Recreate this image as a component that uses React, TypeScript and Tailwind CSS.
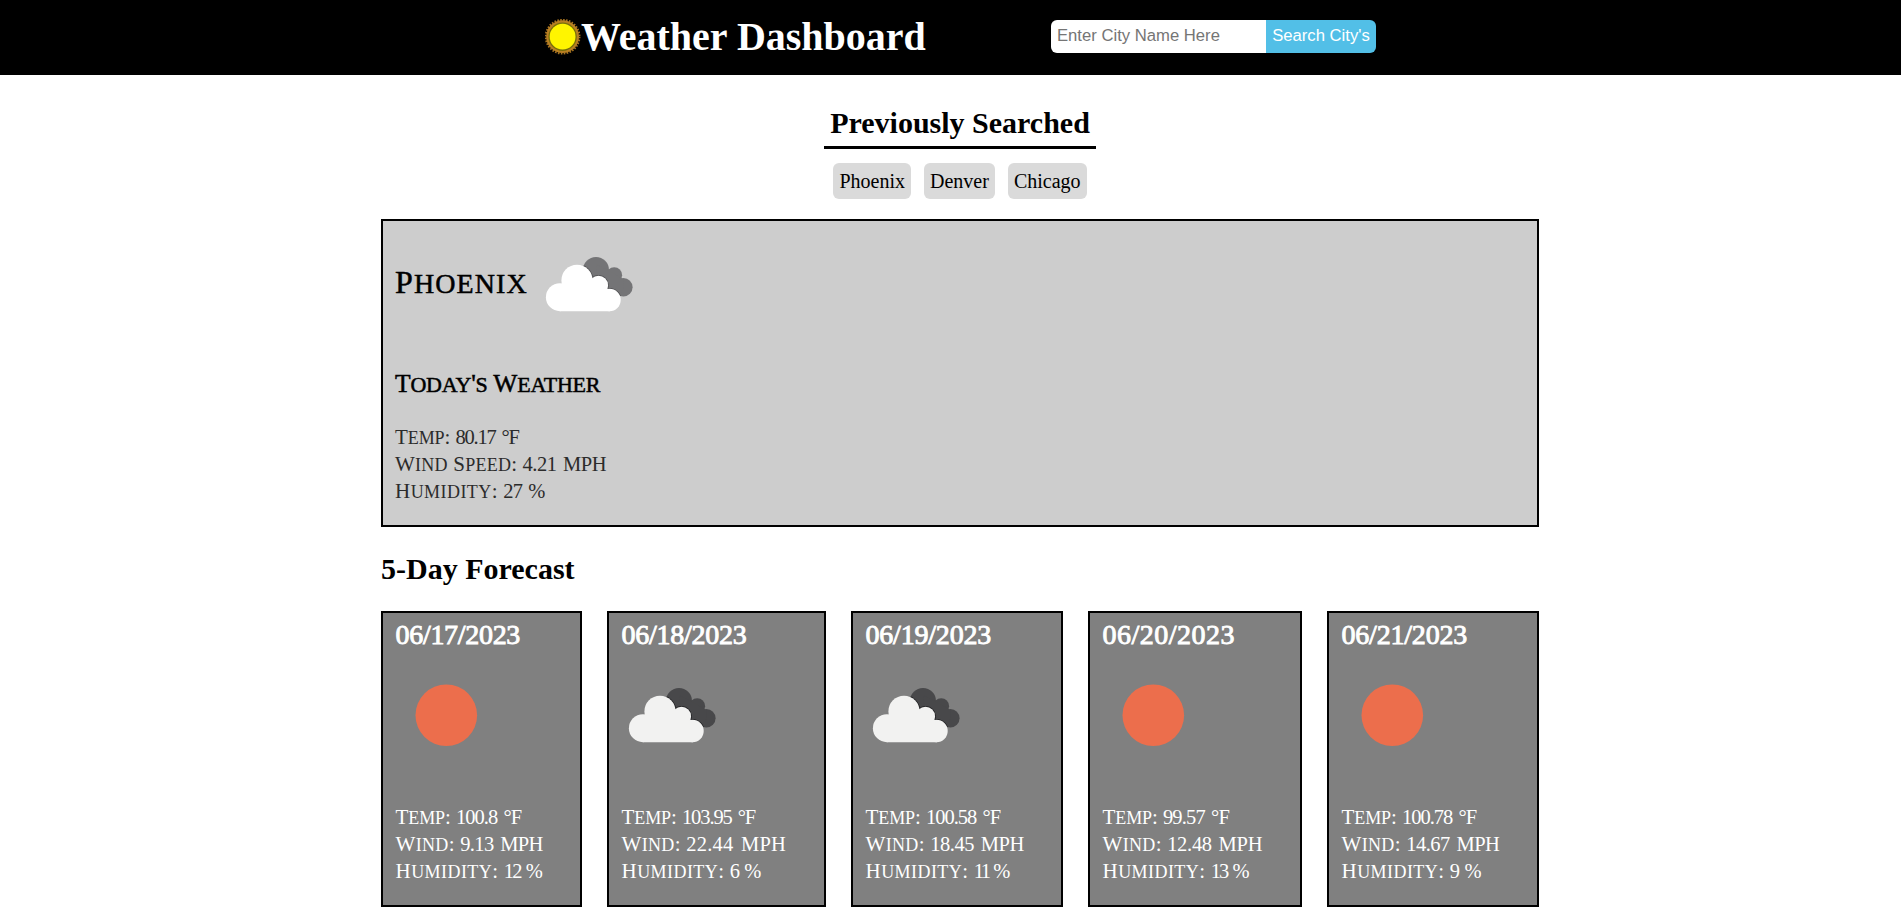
import { Fragment } from "react";

type Icon = "sun" | "cloud";
type Line = { label: string; value: string; tracking: string };
type Day = { date: string; dateTracking: string; width: string; icon: Icon; lines: Line[] };

const cities = ["Phoenix", "Denver", "Chicago"];

const labelTracking: Record<string, string> = {
  "Temp:": "tracking-[-0.1px]",
  "Wind:": "tracking-[0.35px]",
  "Wind Speed:": "tracking-[0.25px]",
  "Humidity:": "tracking-[0.45px]",
};

const today: Line[] = [
  { label: "Temp:", value: "80.17 °F", tracking: "tracking-[-1.2px]" },
  { label: "Wind Speed:", value: "4.21 MPH", tracking: "tracking-[-0.5px]" },
  { label: "Humidity:", value: "27 %", tracking: "tracking-[-0.9px]" },
];

const days: Day[] = [
  {
    date: "06/17/2023", dateTracking: "tracking-[-0.3px]", width: "w-[201px]", icon: "sun",
    lines: [
      { label: "Temp:", value: "100.8 °F", tracking: "tracking-[-0.95px]" },
      { label: "Wind:", value: "9.13 MPH", tracking: "tracking-[-0.6px]" },
      { label: "Humidity:", value: "12 %", tracking: "tracking-[-1.9px]" },
    ],
  },
  {
    date: "06/18/2023", dateTracking: "tracking-[-0.25px]", width: "w-[219px]", icon: "cloud",
    lines: [
      { label: "Temp:", value: "103.95 °F", tracking: "tracking-[-1.1px]" },
      { label: "Wind:", value: "22.44 MPH", tracking: "tracking-[0.25px]" },
      { label: "Humidity:", value: "6 %", tracking: "tracking-[-1.5px]" },
    ],
  },
  {
    date: "06/19/2023", dateTracking: "tracking-[-0.2px]", width: "w-[212px]", icon: "cloud",
    lines: [
      { label: "Temp:", value: "100.58 °F", tracking: "tracking-[-1px]" },
      { label: "Wind:", value: "18.45 MPH", tracking: "tracking-[-0.45px]" },
      { label: "Humidity:", value: "11 %", tracking: "tracking-[-2.5px]" },
    ],
  },
  {
    date: "06/20/2023", dateTracking: "tracking-[0.5px]", width: "w-[214px]", icon: "sun",
    lines: [
      { label: "Temp:", value: "99.57 °F", tracking: "tracking-[-0.85px]" },
      { label: "Wind:", value: "12.48 MPH", tracking: "tracking-[-0.3px]" },
      { label: "Humidity:", value: "13 %", tracking: "tracking-[-2px]" },
    ],
  },
  {
    date: "06/21/2023", dateTracking: "tracking-[-0.2px]", width: "w-[212px]", icon: "sun",
    lines: [
      { label: "Temp:", value: "100.78 °F", tracking: "tracking-[-1px]" },
      { label: "Wind:", value: "14.67 MPH", tracking: "tracking-[-0.5px]" },
      { label: "Humidity:", value: "9 %", tracking: "tracking-[-1.4px]" },
    ],
  },
];

/* Tall small capitals: each lower-case run is enlarged so it sits just under cap height. */
function Caps({ text }: { text: string }) {
  return (
    <>
      {text.split(/([a-z]+)/).map((part, i) =>
        /^[a-z]/.test(part) ? (
          <span key={i} className="text-[1.25em] leading-none [font-variant-caps:small-caps]">
            {part}
          </span>
        ) : (
          <Fragment key={i}>{part}</Fragment>
        ),
      )}
    </>
  );
}

function Stat({ line }: { line: Line }) {
  return (
    <p className="h-[27px] whitespace-nowrap text-[21px] leading-[27px]">
      <span className={labelTracking[line.label]}>
        <Caps text={line.label} />
      </span>{" "}
      <span className={`text-[20.5px] [word-spacing:2px] ${line.tracking}`}>{line.value}</span>
    </p>
  );
}

function SunLogo() {
  return (
    <svg className="size-9" viewBox="0 0 36 36">
      <circle cx="17.6" cy="17.7" r="16.9" fill="none" stroke="#a87420" strokeWidth="2" strokeDasharray="1.6 1.35" />
      <circle cx="17.6" cy="17.7" r="16.4" fill="#b97f22" />
      <circle cx="17.6" cy="17.7" r="14.2" fill="#77700a" />
      <circle cx="17.6" cy="17.7" r="12.9" fill="#fff500" />
    </svg>
  );
}

function WeatherIcon({ icon, bright = false }: { icon: Icon; bright?: boolean }) {
  if (icon === "sun") {
    return (
      <svg className="size-[100px]" viewBox="0 0 100 100">
        <circle cx="50.3" cy="50.3" r="30.8" fill="#ec6e4c" />
      </svg>
    );
  }
  const clip = bright ? "back-bright" : "back";
  const back = (
    <>
      <circle cx="57" cy="36" r="13" />
      <circle cx="75.2" cy="41.2" r="7.9" />
      <circle cx="84.4" cy="53.2" r="9.2" />
      <path d="M57 30L68 36L76 40L84 45L85 53L80 62L60 56Z" />
    </>
  );
  const front = (
    <>
      <circle cx="20.9" cy="63.2" r="14" />
      <circle cx="38" cy="46.4" r="15.6" />
      <circle cx="59.5" cy="51.4" r="9.6" />
      <circle cx="70.5" cy="66" r="11.2" />
      <path d="M21 77.2V50H38L60 48L69 56L71 77.2Z" />
    </>
  );
  return (
    <svg className="size-[100px]" viewBox="0 0 100 100">
      <clipPath id={clip}>{back}</clipPath>
      <g fill={bright ? "#747476" : "#48484a"}>{back}</g>
      <g clipPath={`url(#${clip})`} fill="none" stroke={bright ? "#4c4c4e" : "#1c1c1e"} strokeWidth="1.6">
        {front}
      </g>
      <g fill={bright ? "#ffffff" : "#f2f2f1"}>{front}</g>
    </svg>
  );
}

export default function App() {
  return (
    <div className="h-[916px] overflow-hidden bg-white font-['Liberation_Serif',serif] text-black">
      <header className="flex h-[75px] items-start bg-black pl-[545px]">
        <div className="flex h-[73px] w-[506px] items-center">
          <SunLogo />
          <h1 className="whitespace-nowrap text-[40px] font-bold leading-[46px] text-white">Weather Dashboard</h1>
        </div>
        <form className="mt-5 flex h-[33px]">
          <input
            placeholder="Enter City Name Here"
            className="h-[33px] w-[215px] rounded-l-[6px] bg-white px-[6px] pb-[2px] font-['Liberation_Sans',sans-serif] text-[16.67px] placeholder:text-[#757575]"
          />
          <button
            type="button"
            className="h-[33px] w-[110px] whitespace-nowrap rounded-r-[6px] bg-[#52bfe7] pb-[2px] font-['Liberation_Sans',sans-serif] text-[16.67px] text-white"
          >
            Search City's
          </button>
        </form>
      </header>

      <main className="ml-[381px] w-[1158px]">
        <section className="flex flex-col items-center pt-[25px]">
          <h2 className="flex h-[49px] w-[272px] items-center justify-center border-b-[3px] border-black pb-[2px] text-[30px] font-bold">
            Previously Searched
          </h2>
          <div className="mt-[14px] flex gap-[13px]">
            {cities.map((c) => (
              <button key={c} type="button" className="h-9 rounded-[6px] bg-[#dadada] px-[6px] pb-px text-[20px]">
                {c}
              </button>
            ))}
          </div>
        </section>

        <section className="mt-5 h-[308px] border-2 border-black bg-[#cdcdcd] pl-[12px]">
          <div className="flex h-[113px] items-start pt-[13px]">
            <h2 className="mt-[26px] w-[144px] whitespace-nowrap text-[32px] leading-[40px] tracking-[1.1px] [-webkit-text-stroke:0.5px_black]">
              <Caps text="Phoenix" />
            </h2>
            <WeatherIcon icon="cloud" bright />
          </div>
          <h3 className="mt-[32px] h-8 whitespace-nowrap text-[25.5px] leading-8 tracking-[-0.2px] [-webkit-text-stroke:0.5px_black]">
            <Caps text="Today's Weather" />
          </h3>
          <div className="mt-[25px] text-[#2b2b2b]">
            {today.map((l) => (
              <Stat key={l.label} line={l} />
            ))}
          </div>
        </section>

        <h2 className="mt-[24px] h-9 text-[30px] font-bold leading-9">5-Day Forecast</h2>

        <section className="mt-[24px] flex gap-[25px]">
          {days.map((d) => (
            <article
              key={d.date}
              className={`h-[296px] shrink-0 border-2 border-black bg-[#808080] pl-[13px] text-white ${d.width}`}
            >
              <h3
                className={`-ml-[0.5px] mt-[6px] h-8 text-[28px] leading-8 [-webkit-text-stroke:0.9px_white] ${d.dateTracking}`}
              >
                {d.date}
              </h3>
              <div className="mt-[14px] h-[100px]">
                <WeatherIcon icon={d.icon} />
              </div>
              <div className="-ml-[0.5px] mt-[38px]">
                {d.lines.map((l) => (
                  <Stat key={l.label} line={l} />
                ))}
              </div>
            </article>
          ))}
        </section>
      </main>
    </div>
  );
}
